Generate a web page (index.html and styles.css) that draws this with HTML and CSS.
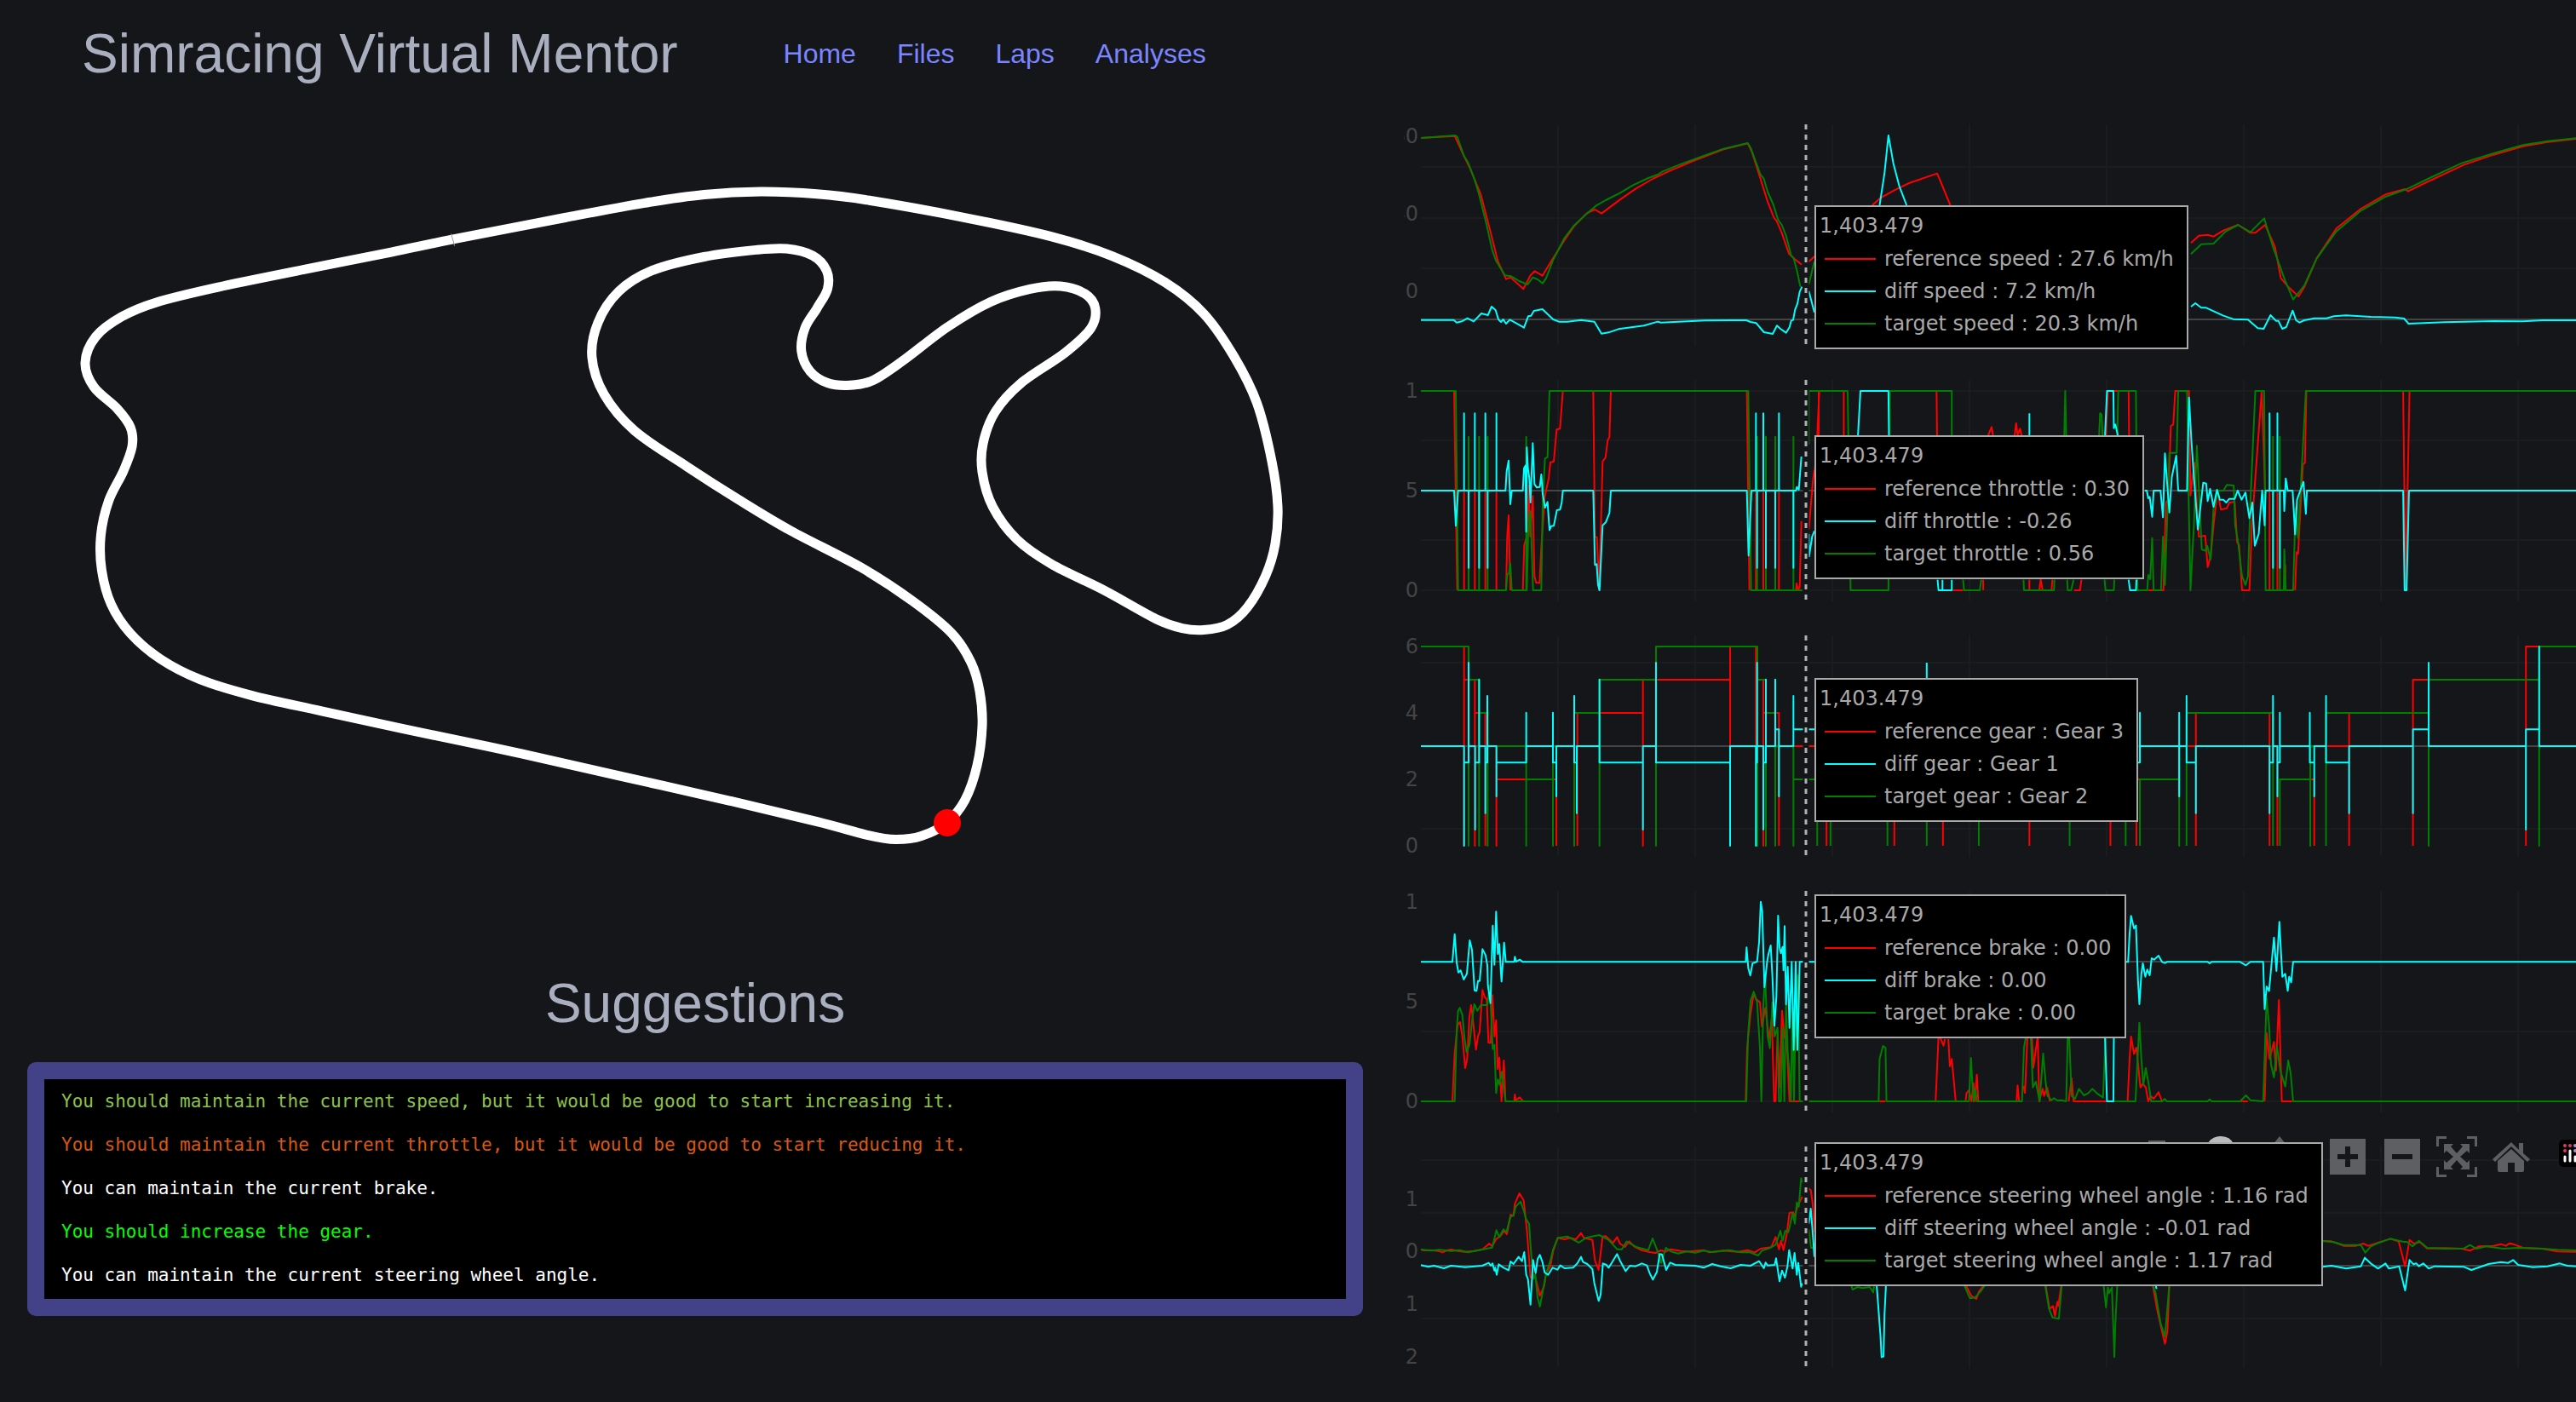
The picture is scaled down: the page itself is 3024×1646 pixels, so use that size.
FILE: index.html
```html
<!DOCTYPE html>
<html lang="en">
<head>
<meta charset="utf-8">
<title>Simracing Virtual Mentor</title>
<link rel="stylesheet" href="styles.css">
</head>
<body>
<header class="site-header">
  <h1 class="brand">Simracing Virtual Mentor</h1>
  <nav class="site-nav">
    <a href="#home">Home</a>
    <a href="#files">Files</a>
    <a href="#laps">Laps</a>
    <a href="#analyses">Analyses</a>
  </nav>
</header>
<main class="dashboard">
  <div class="overview">
    <svg class="track" viewBox="0 130 1632 1000" role="img" aria-label="Track map">
      <g transform="scale(1.0204 .676)">
        <path id="circuit" class="circuit" d=""/>
        <path class="start-line" d="M519,406L523,427"/>
      </g>
      <circle class="car" cx="1112" cy="966" r="16"/>
    </svg>
    <h2 class="section-title">Suggestions</h2>
    <div class="suggestions">
      <p class="hint-raise-soft">You should maintain the current speed, but it would be good to start increasing it.</p>
      <p class="hint-lower-soft">You should maintain the current throttle, but it would be good to start reducing it.</p>
      <p>You can maintain the current brake.</p>
      <p class="hint-raise">You should increase the gear.</p>
      <p>You can maintain the current steering wheel angle.</p>
    </div>
  </div>

  <div class="charts">
    <section class="chart">
      <svg class="plot">
        <path class="grid" d="M181,16V276M342,16V276M503,16V276M664,16V276M825,16V276M986,16V276M1147,16V276M1308,16V276M20,66H1392M20,126H1392M20,185H1392"/>
        <path class="zero" d="M20,245H1392"/>
        <g class="ticks"><text x="17" y="38">60</text><text x="17" y="129">40</text><text x="17" y="220">20</text></g>
        <g transform="translate(-8 0) scale(.33333)">
          <path class="ref" d="M84,96 203,89 236,160 258,205 295,295 330,430 355,530 384,593 400,587 445,628 470,580 485,565 512,581 540,535 590,455 625,405 670,360 697,348 720,362 780,317 840,275 900,240 960,212 1050,174 1150,136 1235,115 1250,145 1280,240 1305,320 1328,378 1337,388 1355,430 1380,503 1400,522 1425,542M1450,532 1470,513"/>
          <path class="target" d="M84,96 205,87 212,92 236,160 250,182 275,248 290,300 315,400 335,490 348,527 380,580 402,583 430,600 460,612 478,587 495,594 513,608 525,590 550,525 590,448 622,406 660,370 700,335 735,315 785,290 830,263 885,237 918,225 935,214 1000,188 1080,159 1150,134 1235,114 1245,130 1280,225 1292,240 1305,285 1325,330 1342,384 1355,402 1370,440 1388,510 1397,520 1410,570 1420,620M1450,612 1470,530"/>
          <path class="diff" d="M84,737 200,737 210,746 228,742 248,731 270,742 297,714 320,720 333,690 347,702 357,735 366,744 374,735 384,750 397,736 410,743 447,764 462,724 472,722 482,705 512,699 550,735 570,743 600,743 648,737 695,743 720,785 745,781 780,769 870,757 918,743 930,746 1085,739 1230,738 1245,744 1265,748 1292,780 1323,786 1338,757 1350,768 1370,782 1382,763 1388,740 1395,737 1402,700 1410,680 1418,638 1426,620M1450,635 1470,710"/>
        </g>
        <g transform="translate(472 0) scale(.57654 .33333)">
          <path class="ref" d="M135,333 152,307 180,280 210,255 267,221 272,240 294,333M784,466 800,440 818,437 830,443 850,422 880,402 905,430 915,430 935,402 955,480 967,590 983,622 1003,654 1015,620 1040,520 1080,415 1130,345 1180,295 1220,276 1226,284 1260,255 1340,190 1400,155 1460,125 1510,110 1568,99"/>
          <path class="target" d="M784,505 805,470 830,468 855,425 880,402 905,428 933,379 950,475 975,595 992,665 1015,615 1040,520 1080,425 1130,352 1180,303 1225,275 1270,237 1335,185 1400,150 1460,121 1510,107 1568,97"/>
          <path class="diff" d="M150,333 160,220 168,87 178,185 190,265 205,333M784,690 793,678 805,694 815,694 850,722 870,734 900,736 920,766 932,768 946,720 957,740 962,740 970,768 978,762 991,704 998,738 1005,746 1015,738 1035,731 1060,731 1075,724 1100,721 1150,726 1200,728 1218,732 1227,750 1300,745 1400,741 1460,742 1500,738 1568,738"/>
        </g>
        <path class="cursor-gap" d="M472,16V276"/><path class="cursor" d="M472,16V276"/>
      </svg>
      <div class="tooltip tooltip-speed">
        <p>1,403.479</p>
        <ul><li class="key-ref">reference speed : 27.6 km/h</li><li class="key-diff">diff speed : 7.2 km/h</li><li class="key-target">target speed : 20.3 km/h</li></ul>
      </div>
    </section>

    <section class="chart">
      <svg class="plot">
        <path class="grid" d="M181,16V276M342,16V276M503,16V276M664,16V276M825,16V276M986,16V276M1147,16V276M1308,16V276M20,29H1392M20,87H1392M20,204H1392M20,263H1392"/>
        <path class="zero" d="M20,146H1392"/>
        <g class="ticks"><text x="17" y="37">1</text><text x="17" y="154">0.5</text><text x="17" y="271">0</text></g>
        <g transform="translate(-8 0) scale(.33333)">
          <path class="ref" d="M84,87 201,87 212,789M236,438V789M274,438V789M311,438V789M350,438V789M384,789 388,600 393,525 399,789M443,789 448,630 460,590 463,420 469,600 478,457 484,740 490,763 502,763 508,640 520,460 534,395 540,338 552,336 562,223 574,220 584,87 691,87 697,600 704,603 712,789 724,335 734,322 742,260 748,250 753,87H1232L1241,789M1264,438V789M1290,438V789M1345,438V789M1405,789 1407,765 1412,785 1418,780 1424,545M1450,575 1465,400 1470,365M1480,243 1487,87"/>
          <path class="target" d="M84,87 207,87 215,789 252,789V248V789H289V248V789H319V248V789H384L388,733 394,730 399,695 404,789 455,789 455,248 457,789 463,550 470,510 479,789 508,789 513,480 521,325 530,320 537,87H1237L1247,789H1268V248V789H1299V248V789H1332V248V789H1396V248V789H1427M1450,275 1450,87H1500"/>
          <path class="diff" d="M84,438 201,438 207,562 215,438H236V166V438H252V710V438H274V166V438H289V710V438H311V166V438H319V710V438H350V166V438H382L386,370 393,332 399,486 404,438 443,438 447,360 452,350 455,583 457,286 461,360 466,395 470,480 478,271 484,415 492,427 503,425 508,381 513,450 521,498 530,478 537,577 543,563 552,562 563,507 574,505 580,480 584,438 691,438 697,700 703,697 708,770 713,789 724,560 735,550 748,517 753,438H1232L1238,667 1248,438H1264V166V438H1268V710V438H1290V166V438H1299V710V438H1332V710V438H1345V166V438H1396V710V438H1405L1408,425 1415,435 1424,318M1450,590 1451,670 1462,600 1470,580"/>
        </g>
        <g transform="translate(472 0) scale(.57654 .33333)">
          <path class="ref" d="M18,365 26,243 26,87H77V243M266,87 267,243M371,243 378,214 381,243M425,243 428,200 431,243 436,220 439,243M299,789H320M361,789V752M455,752V789M475,789 478,752 482,789 500,789 502,752M546,789 558,789 561,752M611,243 615,87 657,87 658,243M697,789 728,789 733,480 738,470 743,210 748,205 752,87 780,87 783,455 791,340 800,600 813,597 818,707 824,670 830,560 838,438 845,505 857,500 862,480 873,478 878,620 882,630 888,789 903,789 908,560 928,87 935,438M944,438V789M960,438V789M976,700V789M996,789 999,655 1002,660 1012,345 1016,340 1019,87 1216,87 1221,789 1229,87"/>
          <path class="target" d="M5,87 85,87 91,789 168,789 171,87 297,87 297,243M320,752 322,789 354,789 357,752M443,752 444,789 505,789 506,752M526,243 528,87 530,243M532,752 533,789 540,789 545,752M597,243 599,165 602,170 604,243M608,752 610,789 627,789 628,752M634,243 636,87 672,87 675,789 695,789 697,735 701,750 705,605 708,789 723,789 727,600 731,770 740,305 755,305 758,87 776,87 779,438 783,789 790,560 796,280 806,645 813,650 817,632 824,680 830,500 840,438 850,438 857,418 871,420 874,560 880,620 888,740 895,770 900,740 905,480 915,87 933,87 936,789 951,789 951,248 951,789 965,789 965,248 965,789 973,789 974,645 977,789 992,789 997,500 1002,605 1018,87 1568,87"/>
          <path class="diff" d="M106,243 111,87 168,87 169,243M268,752 270,789 278,789 278,752M278,789H297V752M455,166V243M609,243 613,87 626,87 627,218 630,205 635,243M657,752 660,789 672,789 673,752M690,438 694,438 697,465 700,460 705,530 708,438 722,438 727,532 731,307 740,515 745,390 754,315 758,438 776,438 780,110 785,265 790,390 798,575 805,470 809,410 815,413 818,475 823,432 830,495 837,435 843,470 850,470 856,480 862,467 873,467 879,438 887,470 895,445 903,535 909,480 914,632 922,590 929,438 934,560 936,438H944V166V438H951V710V438H960V166V438H965V710V438H973L974,510 977,395 981,438 991,438 996,592 1000,470 1013,407 1018,520 1020,438 1216,438 1219,789 1223,789 1228,438 1568,438"/>
        </g>
        <path class="cursor-gap" d="M472,16V276"/><path class="cursor" d="M472,16V276"/>
      </svg>
      <div class="tooltip tooltip-throttle">
        <p>1,403.479</p>
        <ul><li class="key-ref">reference throttle : 0.30</li><li class="key-diff">diff throttle : -0.26</li><li class="key-target">target throttle : 0.56</li></ul>
      </div>
    </section>

    <section class="chart">
      <svg class="plot">
        <path class="grid" d="M181,16V276M342,16V276M503,16V276M664,16V276M825,16V276M986,16V276M1147,16V276M1308,16V276M20,48H1392M20,243H1392"/>
        <path class="zero" d="M20,146H1392"/>
        <g class="ticks"><text x="17" y="37">6</text><text x="17" y="115">4</text><text x="17" y="193">2</text><text x="17" y="271">0</text></g>
        <g transform="translate(-8 0) scale(.33333)">
          <path class="ref" d="M84,87H236V789V204H274V789V321H311V789M311,438H350V789V555H561V789M635,789V321H866V789V204H1173V438M1173,438V87H1264V789M1264,204H1290V789V321H1345V789M1396,438H1470"/>
          <path class="target" d="M84,87H252V789V204H289V789V321H319V789V438H455V789V555H549V789V438H624V789V321H713V789V204H912V789V87H1269V789V204H1299V789V321H1332V789V438H1396V789V555H1470"/>
          <path class="diff" d="M84,438H236V789V496H252V144V438H275V732V496H289V203V438H311V674V496H318V261V438H350V615V496H455V320V438H549V320V496H561V615V438H624V261V496H633V674V438H713V203V496H866V732V438H912V144V496H1173V789V438H1264V789V496H1268V144V438H1290V732V496H1299V203V438H1332V203V379H1345V615V438H1396V261V379H1470"/>
        </g>
        <g transform="translate(472 0) scale(.57654 .33333)">
          <path class="ref" d="M42,700V789M180,700V789M279,700V789M455,700V789M620,700V789M673,700V789M676,555H680M775,438H794M794,321V789M944,321V789M960,438V789M1027,555H1035V789M1060,438H1106M1106,321V789M1236,789V204H1268M1466,789V87H1493"/>
          <path class="target" d="M23,700V789M50,700V789M166,700V789M246,700V789M352,700V789M537,700V789M651,700V789M680,789V555H760V789V438M775,789V321H951V789M965,789V555H1027V789V438H1036M1059,789V321H1268V789V204H1493V789V87H1568"/>
          <path class="diff" d="M246,144V198M676,496H680V320V438H760V320V615V438H775V261V496H794V674V438H944V674V496H951V261V438H960V615V496H965V320V438H1026V320V496H1035V615V438H1059V261V496H1106V674V438H1236V674V379H1268V144V438H1466V732V379H1493V87V438H1568"/>
        </g>
        <path class="cursor-gap" d="M472,16V276"/><path class="cursor" d="M472,16V276"/>
      </svg>
      <div class="tooltip tooltip-gear">
        <p>1,403.479</p>
        <ul><li class="key-ref">reference gear : Gear 3</li><li class="key-diff">diff gear : Gear 1</li><li class="key-target">target gear : Gear 2</li></ul>
      </div>
    </section>

    <section class="chart">
      <svg class="plot">
        <path class="grid" d="M181,16V276M342,16V276M503,16V276M664,16V276M825,16V276M986,16V276M1147,16V276M1308,16V276M20,181H1392M20,263H1392"/>
        <path class="zero" d="M20,99H1392"/>
        <g class="ticks"><text x="17" y="37">1</text><text x="17" y="154">0.5</text><text x="17" y="271">0</text></g>
        <g transform="translate(-8 0) scale(.33333)">
          <path class="ref" d="M84,789 195,789 203,620 213,520 222,510 230,560 240,672 247,640 255,490 261,450 266,490 278,607 285,560 291,545 301,397 308,420 316,430 322,583 330,583 336,415 343,560 349,503 354,675 360,635 368,789 376,645 382,789 413,789 415,765 418,785 432,775 443,787M1228,789 1233,600 1245,480 1256,410 1265,430 1278,440 1285,525 1297,460 1310,568 1320,500 1328,789 1333,789 1340,545 1347,740 1356,470 1364,560 1373,590 1382,789 1427,789"/>
          <path class="target" d="M84,789 203,789 210,540 215,470 221,460 230,485 238,570 245,615 255,590 265,500 272,447 283,470 295,450 318,450 327,380 337,605 343,590 349,760 355,712 361,730 369,685 382,789 1230,789 1236,560 1245,435 1256,403 1268,440 1278,600 1283,789 1290,450 1296,345 1305,560 1313,602 1322,440 1330,560 1340,530 1345,789 1352,789 1358,530 1364,789 1370,450 1376,620 1382,690 1387,789 1392,460 1398,789 1404,450 1408,560 1412,345 1418,789 1470,789"/>
          <path class="diff" d="M84,298 195,298 203,200 210,300 216,335 224,328 235,360 246,340 256,222 264,255 273,398 280,400 285,365 291,365 301,253 312,275 318,310 320,380 329,443 337,170 343,308 349,121 355,270 360,235 368,367 377,230 383,298 413,298 415,280 420,297 432,290 443,298 1228,298 1231,247 1237,320 1244,346 1252,303 1268,297 1275,230 1281,86 1286,120 1294,387 1303,300 1308,270 1316,240 1322,350 1329,523 1336,420 1342,135 1347,245 1352,268 1358,245 1361,328 1365,172 1370,448 1376,315 1382,530 1390,298 1397,608 1404,298 1410,608 1414,480 1418,298 1470,298"/>
        </g>
        <g transform="translate(472 0) scale(.57654 .33333)">
          <path class="ref" d="M149,789H162M264,789 270,560 275,570 280,593 283,570M290,570 293,665 297,640 305,789M325,789 327,760 332,750 337,789 341,725 344,789 348,695 351,789M429,789 431,733 434,789M443,735 446,760 451,560M460,560 463,670 472,560 475,789 482,745 485,770 491,740 497,789M535,789 541,708 545,789 655,789 659,640 662,560 668,622 673,600 681,740 686,727 692,740 697,789 702,770 708,780 718,757 725,789M885,789H900M934,789 938,548 944,640 953,580 957,680 963,432 969,789 990,789"/>
          <path class="target" d="M5,789 148,789 150,640 157,594 162,600 164,789 332,789 336,636 341,789 345,745 348,789 440,789 444,600 448,560M458,560 462,740 468,720 476,789 483,620 488,720 492,770 500,785 505,778 512,786 520,785 530,789 533,560M536,560 541,770 548,780 556,745 566,768 575,760 583,745 592,760 600,770 605,775 610,560M628,789 671,789 679,512 683,640 687,730 692,672 698,730 703,789 726,789 730,780 735,789 818,789 822,782 826,789 884,789 896,768 905,785 931,789 938,427 943,520 947,660 953,705 959,595 966,680 971,710 976,737 982,645 987,690 992,789 1568,789"/>
          <path class="diff" d="M609,560 613,789 626,789 627,560M645,298 656,298 659,200 662,136 668,180 672,170 676,360 679,447 683,340 686,303 691,350 695,325 700,345 704,285 709,290 718,276 725,298 731,302 735,298 818,298 822,303 826,298 884,298 896,310 905,298 931,298 934,464 938,385 943,400 953,212 958,330 964,157 970,350 976,340 981,400 984,350 988,370 992,298 1568,298"/>
        </g>
        <path class="cursor-gap" d="M472,16V276"/><path class="cursor" d="M472,16V276"/>
      </svg>
      <div class="tooltip tooltip-brake">
        <p>1,403.479</p>
        <ul><li class="key-ref">reference brake : 0.00</li><li class="key-diff">diff brake : 0.00</li><li class="key-target">target brake : 0.00</li></ul>
      </div>
    </section>

    <section class="chart">
      <svg class="plot">
        <path class="grid" d="M181,16V276M342,16V276M503,16V276M664,16V276M825,16V276M986,16V276M1147,16V276M1308,16V276M20,32H1392M20,94H1392M20,218H1392"/>
        <path class="zero" d="M20,156H1392"/>
        <g class="ticks"><text x="17" y="86">1</text><text x="17" y="147">0</text><text x="17" y="209">−1</text><text x="17" y="271">−2</text></g>
        <g transform="translate(-8 -10) scale(.33333)">
          <path class="ref" d="M84,441 95,444 120,443 145,446 160,451 175,444 190,441 215,446 240,449 270,446 300,441 325,420 335,430 350,403 363,395 377,375 387,387 400,318 410,322 415,280 431,243 446,268 458,380 470,540 485,530 503,604 518,570 525,525 540,500 550,445 566,400 590,405 610,400 630,405 648,383 658,400 688,407 697,480 710,513 724,395 735,394 760,418 775,397 785,420 803,432 817,412 835,430 860,443 890,450 910,453 930,444 945,449 963,440 1000,446 1030,448 1080,443 1100,451 1150,445 1200,449 1235,443 1260,451 1280,438 1318,433 1333,397 1345,440 1352,410 1361,443 1372,390 1382,312 1395,310 1400,325 1410,290 1427,255M1450,226 1457,232 1464,280 1470,380"/>
          <path class="target" d="M84,441 120,445 150,442 190,446 220,443 250,451 300,441 335,434 350,373 360,397 375,370 385,380 400,325 410,322 418,290 435,272 445,300 455,335 465,350 472,450 480,545 487,530 495,610 503,642 512,595 525,525 540,480 550,440 566,400 600,395 640,417 665,400 712,390 745,407 775,440 792,440 808,413 845,433 885,443 900,402 915,440 930,488 947,435 965,448 990,455 1020,448 1050,452 1080,445 1110,450 1170,443 1210,451 1240,450 1272,462 1285,445 1310,437 1333,425 1350,375 1358,410 1367,375 1378,380 1385,350 1393,312 1401,350 1408,275 1415,290 1423,190 1427,205M1450,370 1458,435 1465,435"/>
          <path class="diff" d="M84,496 110,502 130,498 165,507 190,498 240,503 300,498 323,488 330,498 336,490 343,515 346,505 351,530 358,493 375,505 393,514 400,483 410,492 428,467 440,482 448,450 455,530 461,545 470,635 479,478 488,524 495,475 503,460 512,485 520,522 532,530 548,505 565,512 575,497 590,507 620,505 635,490 648,467 655,485 670,492 688,510 695,560 710,622 717,600 725,490 737,495 745,505 755,490 775,457 785,480 805,517 820,498 840,500 862,490 880,497 890,525 901,547 915,520 925,457 933,458 948,513 962,487 980,495 1050,498 1080,505 1110,492 1140,500 1175,507 1210,495 1245,498 1275,482 1292,507 1298,487 1305,497 1330,495 1335,472 1347,553 1356,515 1366,540 1375,500 1381,443 1393,508 1400,453 1408,530 1413,488 1423,572 1427,560M1450,350 1457,297 1463,370 1470,467"/>
        </g>
        <g transform="translate(472 -20) scale(.57654 .33333)">
          <path class="ref" d="M325,595 337,635 347,645 352,620 363,595M488,595 496,680 503,670 507,705 512,655 514,670 520,595M706,595 716,690 731,803 736,760 740,595M1045,440 1070,442 1095,458 1120,458 1135,450 1145,458 1190,433 1207,443 1220,530 1229,437 1238,450 1250,445 1265,467 1300,466 1335,468 1352,475 1370,460 1400,458 1415,452 1425,458 1433,449 1440,452 1460,465 1500,468 1530,478 1568,479"/>
          <path class="target" d="M92,595 95,612 105,603 115,607 130,603 137,622 139,595M322,595 334,643 344,640 355,620 365,595M487,595 495,680 502,710 515,715 521,595M606,595 611,675 615,605 617,625 623,605 628,850 630,735 634,595M706,595 712,625 722,730 731,778 740,595M1045,440 1075,445 1095,455 1130,455 1139,482 1150,460 1165,448 1190,433 1215,443 1225,445 1235,460 1248,440 1265,465 1300,468 1340,467 1352,455 1365,468 1385,460 1420,468 1450,465 1500,468 1530,472 1568,474"/>
          <path class="diff" d="M144,595 152,780 154,850 158,848 160,700 163,595M712,595 714,610M1045,533 1070,528 1100,538 1130,530 1138,500 1150,520 1165,538 1180,520 1187,538 1208,530 1220,615 1229,508 1237,523 1243,520 1248,530 1257,520 1268,538 1280,530 1340,532 1355,543 1390,522 1415,515 1430,518 1440,508 1450,525 1480,533 1510,530 1535,520 1550,528 1568,530"/>
        </g>
        <path class="cursor-gap" d="M472,16V276"/><path class="cursor" d="M472,16V276"/>
      </svg>
      <div class="modebar">
        <div class="modebar-group">
          <button type="button" aria-label="Download plot"><svg viewBox="0 0 48 48"><path d="M14,5H34V11H44V42H4V11H14Z"/></svg></button>
        </div>
        <div class="modebar-group">
          <button type="button" class="active" aria-label="Zoom"><svg viewBox="0 0 48 48"><path d="M19,0A17,17 0 1 0 28,31L41,46 47,40 33,27A17,17 0 0 0 19,0Z"/></svg></button>
          <button type="button" aria-label="Pan"><svg viewBox="0 0 48 48"><path d="M24,0 32,10H27V21H38V16L48,24 38,32V27H27V38H32L24,48 16,38H21V27H10V32L0,24 10,16V21H21V10H16Z"/></svg></button>
        </div>
        <div class="modebar-group">
          <button type="button" aria-label="Zoom in"><svg viewBox="0 0 48 48"><path fill-rule="evenodd" d="M3,3H45V45H3ZM21,12V21H12V27H21V36H27V27H36V21H27V12Z"/></svg></button>
          <button type="button" aria-label="Zoom out"><svg viewBox="0 0 48 48"><path fill-rule="evenodd" d="M3,3H45V45H3ZM12,21V27H36V21Z"/></svg></button>
          <button type="button" aria-label="Autoscale"><svg viewBox="0 0 48 48"><path d="M0,0H12V3H3V12H0ZM36,0H48V12H45V3H36ZM0,36H3V45H12V48H0ZM45,36H48V48H36V45H45ZM9,9H20L17,12 24,20 31,12 28,9H39V20L36,17 28,24 36,31 39,28V39H28L31,36 24,28 17,36 20,39H9V28L12,31 20,24 12,17 9,20Z"/></svg></button>
          <button type="button" aria-label="Reset axes"><svg viewBox="0 0 48 48"><path d="M24,7 33,16V8H38V20L46,27 43,30 24,12 5,30 2,27ZM24,15 39,29V40Q39,42 37,42H28V31H20V42H10Q8,42 8,40V29Z"/></svg></button>
        </div>
        <div class="modebar-group">
          <a href="#plotly" aria-label="Produced with Plotly"><svg viewBox="0 0 48 48"><rect x="0" y="4" width="44" height="32" rx="5" fill="#000"/><path d="M7,24V29M13,17V29M19,24V29M26,17V29M33,24V29" stroke="#fff" stroke-width="3" stroke-linecap="round"/><path d="M7,11h0M7,17h0M13,11h0" stroke="#e8316b" stroke-width="4" stroke-linecap="round"/><path d="M19,11h0M19,17h0M26,11h0M33,11h0" stroke="#b48ad6" stroke-width="4" stroke-linecap="round"/></svg></a>
        </div>
      </div>
      <div class="tooltip tooltip-steering">
        <p>1,403.479</p>
        <ul><li class="key-ref">reference steering wheel angle : 1.16 rad</li><li class="key-diff">diff steering wheel angle : -0.01 rad</li><li class="key-target">target steering wheel angle : 1.17 rad</li></ul>
      </div>
    </section>
  </div>
</main>
<script src="track.js"></script>
</body>
</html>
```
FILE: styles.css
```css
* { box-sizing: border-box; }

body {
  margin: 0;
  min-height: 100vh;
  background: #15161a;
  color: #a9afbf;
  font-family: "Liberation Sans", Arial, sans-serif;
  overflow-x: hidden;
}

h1, h2, p, ul { margin: 0; padding: 0; }

.site-header {
  display: flex;
  align-items: center;
  gap: 124px;
  height: 130px;
  padding: 0 96px 4px;
}

.brand, .section-title {
  font-size: 64px;
  font-weight: 400;
  line-height: 80px;
}

.site-nav { display: flex; gap: 48px; }
.site-nav a {
  color: #7a85ff;
  font-size: 32px;
  line-height: 40px;
  text-decoration: none;
}

.dashboard {
  display: grid;
  grid-template-columns: minmax(0, 34fr) minmax(0, 29fr);
}

/* Track map and suggestions */
.track { display: block; width: 100%; }
.circuit, .start-line { fill: none; vector-effect: non-scaling-stroke; }
.circuit { stroke: #fff; stroke-width: 11px; stroke-linejoin: round; }
.start-line { stroke: #9a9a9a; stroke-width: 1px; }
.car { fill: #f00; }

.section-title { margin: 8px 0 29px; text-align: center; }

.suggestions {
  display: grid;
  grid-auto-rows: 1fr;
  align-items: center;
  min-height: 298px;
  margin: 0 32px;
  padding: 0 20px 2px;
  border: 20px solid #434188;
  border-radius: 10px;
  background: #000;
  color: #fff;
  font-family: "DejaVu Sans Mono", monospace;
  font-size: 21px;
  line-height: 32px;
}
.hint-raise-soft { color: #8bc34a; }
.hint-lower-soft { color: #d9580d; }
.hint-raise { color: #0f0; }

/* Telemetry charts */
.charts {
  padding-left: 16px;
  font-family: "DejaVu Sans", Verdana, sans-serif;
  font-size: 24px;
}
.chart { position: relative; height: 300px; overflow: hidden; }
.plot { display: block; width: 100%; height: 100%; }
.plot path { fill: none; stroke-width: 2px; stroke-linejoin: round; vector-effect: non-scaling-stroke; }
.plot .grid { stroke: #1b1c20; }
.plot .zero { stroke: #444; }
.plot .ref { stroke: #f00; }
.plot .target { stroke: #008000; }
.plot .diff { stroke: #0ff; }
.plot .cursor-gap { stroke: #15161a; stroke-width: 7px; }
.plot .cursor { stroke: #b0b0b0; stroke-width: 3px; stroke-dasharray: 6 6; }
.ticks { fill: #444; text-anchor: end; }

.tooltip {
  position: absolute;
  left: 482px;
  padding: 3px 15px 9px 4px;
  border: 2px solid #a9a9a9;
  background: #000;
  color: #a9a9a9;
  line-height: 38px;
  white-space: nowrap;
}
.tooltip p { line-height: 39px; }
.tooltip ul { list-style: none; }
.tooltip li { display: flex; align-items: center; gap: 10px; padding-left: 6px; }
.tooltip li::before { content: ""; width: 60px; height: 2px; background: currentColor; }
.tooltip .key-ref::before { color: #f00; }
.tooltip .key-diff::before { color: #0ff; }
.tooltip .key-target::before { color: #008000; }
.tooltip-speed { top: 111px; }
.tooltip-throttle { top: 81px; }
.tooltip-gear { top: 66px; }
.tooltip-brake { top: 20px; }
.tooltip-steering { top: 11px; }

.modebar { position: absolute; left: 852px; top: 4px; display: flex; gap: 16px; }
.modebar-group { display: flex; }
.modebar button, .modebar a {
  display: block;
  flex: none;
  width: 64px;
  height: 48px;
  padding: 0 8px;
  border: 0;
  background: none;
}
.modebar svg { display: block; width: 48px; height: 48px; fill: #5e5f62; }
.modebar .active svg { fill: #bbbbbd; }
```
FILE: track.js
```js
// Centre line of the circuit, starting and ending at the start line.
const line = [
  [520,416],[450,438],[350,468],[250,499],[180,525],[140,550],[110,585],[98,630],[108,672],[135,710],
  [150,742],[152,775],[142,818],[125,870],[116,930],[117,990],[128,1050],[150,1100],[185,1145],[230,1180],
  [290,1208],[370,1235],[480,1271],[600,1309],[720,1350],[840,1391],[940,1427],[1000,1451],[1030,1458],[1060,1452],
  [1089,1429],[1110,1390],[1124,1330],[1130,1260],[1127,1200],[1117,1150],[1095,1100],[1050,1044],[990,985],[910,922],
  [850,868],[790,810],[730,748],[695,685],[681,620],[688,560],[712,506],[750,470],[810,446],[870,434],
  [905,432],[935,444],[951,470],[952,502],[940,535],[926,570],[922,610],[932,645],[952,665],[978,669],
  [1005,660],[1040,625],[1090,568],[1140,524],[1185,502],[1220,497],[1248,510],[1260,535],[1255,570],[1225,613],
  [1175,665],[1145,715],[1131,770],[1130,820],[1142,880],[1170,937],[1210,980],[1270,1025],[1330,1075],[1360,1091],
  [1385,1094],[1412,1085],[1435,1055],[1456,1000],[1467,945],[1470,880],[1463,800],[1446,700],[1420,620],[1385,545],
  [1340,490],[1280,445],[1210,411],[1110,378],[1000,348],[940,337],[875,333],[810,338],[740,353],[650,378]
];

// Closed Catmull-Rom spline written as cubic Bezier segments.
const at = i => line[(i + line.length) % line.length];
let d = `M${line[0]}`;
for (let i = 0; i < line.length; i++) {
  const [a, b, c, e] = [at(i - 1), at(i), at(i + 1), at(i + 2)];
  d += `C${b[0] + (c[0] - a[0]) / 6},${b[1] + (c[1] - a[1]) / 6} ` +
       `${c[0] - (e[0] - b[0]) / 6},${c[1] - (e[1] - b[1]) / 6} ${c}`;
}
document.getElementById("circuit").setAttribute("d", d + "Z");
```
